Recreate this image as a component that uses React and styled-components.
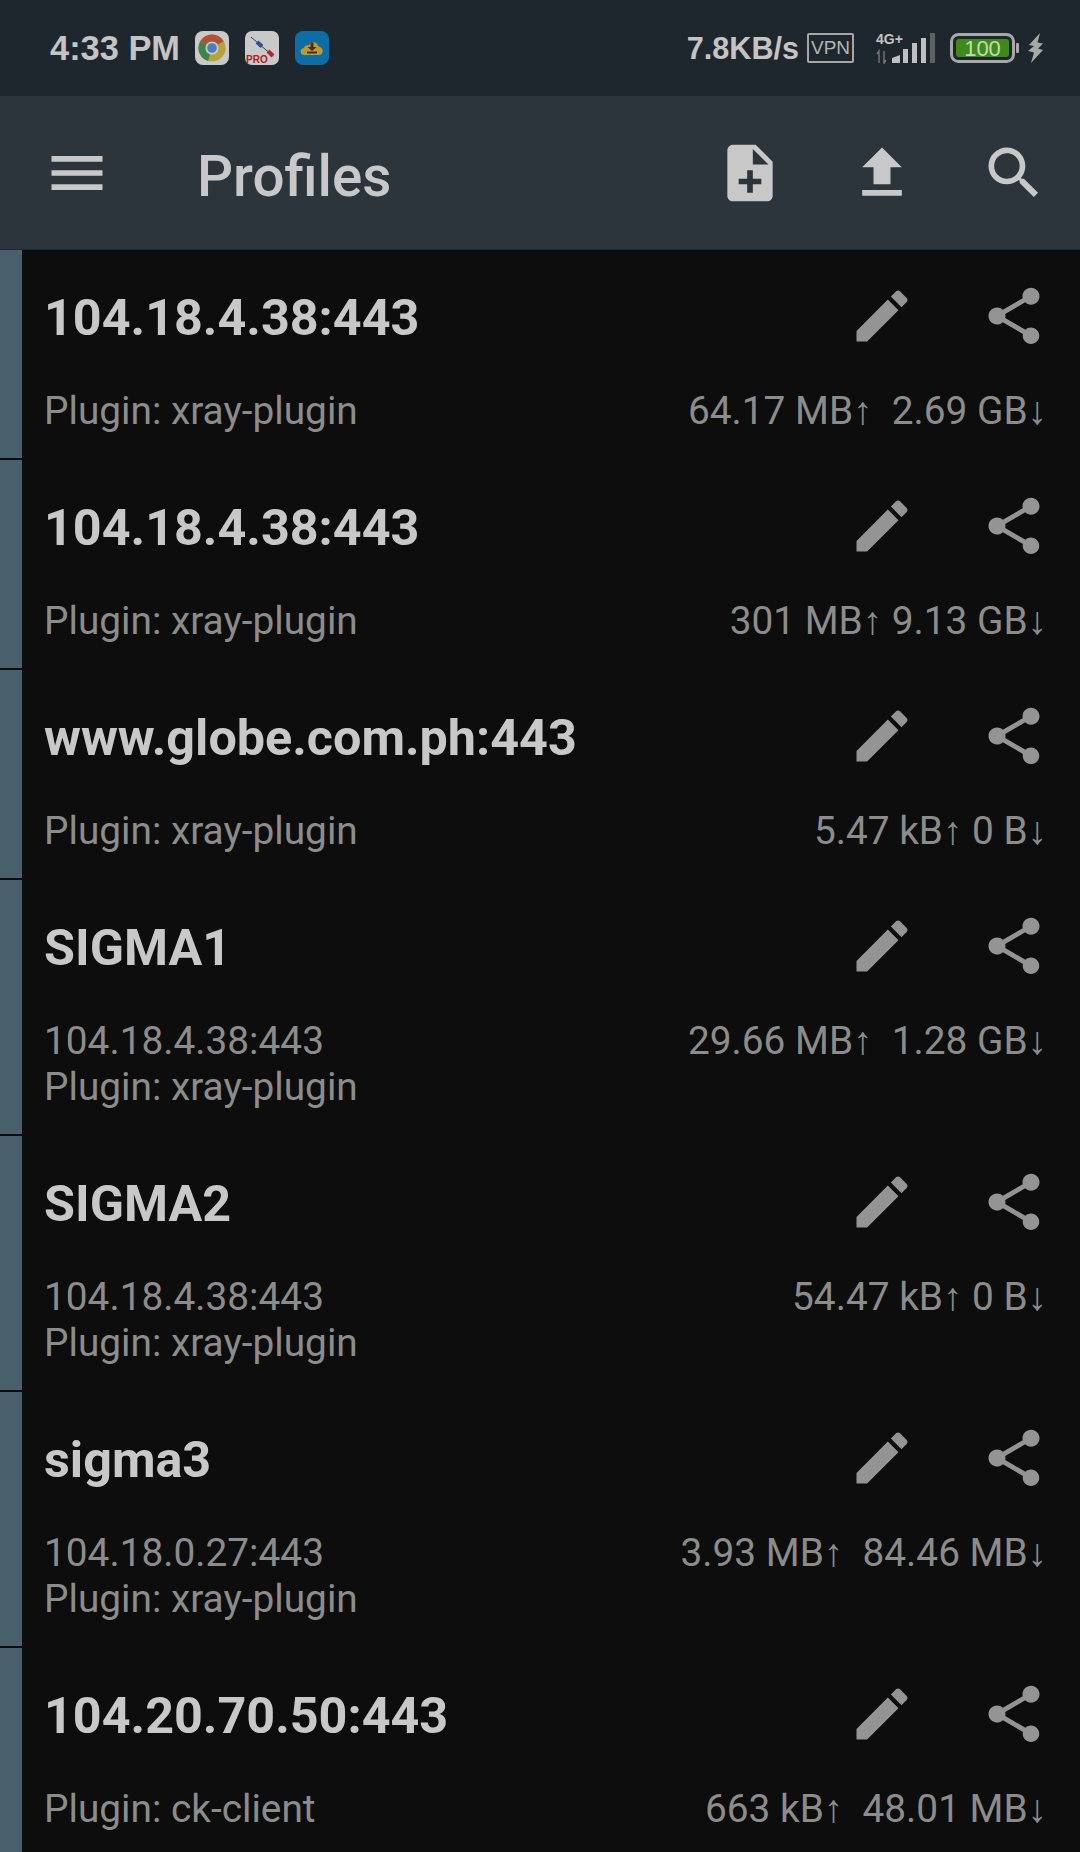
import React from "react";
import styled, { createGlobalStyle } from "styled-components";

const Global = createGlobalStyle`
  html, body { margin: 0; padding: 0; background: #0d0d0d; }
  body { width: 1080px; height: 1852px; overflow: hidden; font-family: Roboto, sans-serif; }
`;

const Page = styled.div`
  width: 1080px;
  height: 1852px;
  display: flex;
  flex-direction: column;
  overflow: hidden;
  background: #0d0d0d;
`;

const StatusBar = styled.header`
  height: 96px;
  flex: none;
  display: flex;
  align-items: center;
  padding: 0 36px 0 50px;
  box-sizing: border-box;
  background: #1f272e;
  color: #c4c4c4;
  font-family: "Liberation Sans", sans-serif;
`;

const Clock = styled.span`
  font-size: 34.4px;
  font-weight: 700;
  margin-right: 15px;
`;

const AppIcon = styled.svg`
  width: 34px;
  height: 34px;
  flex: none;
  margin-right: 16px;
`;

const StatusRight = styled.div`
  margin-left: auto;
  display: flex;
  align-items: center;
`;

const Speed = styled.span`
  font-size: 30.6px;
  font-weight: 700;
  margin-right: 8px;
`;

const VpnBadge = styled.span`
  width: 47px;
  height: 30px;
  box-sizing: border-box;
  border: 2px solid #a6a6a6;
  border-radius: 2px;
  display: flex;
  align-items: center;
  justify-content: center;
  font-size: 19px;
  color: #b4b4b4;
  margin-right: 20px;
`;

const StatusGlyph = styled.svg`
  flex: none;
  display: block;
  margin-left: ${(p) => p.$before || 0}px;
`;

const Toolbar = styled.div`
  height: 154px;
  flex: none;
  display: flex;
  align-items: center;
  box-sizing: border-box;
  background: #2b353b;
  border-bottom: 1px solid #1c2a36;
`;

const MenuButton = styled.div`
  width: 154px;
  height: 100%;
  flex: none;
  display: flex;
  align-items: center;
  justify-content: center;
`;

const Title = styled.h1`
  flex: 1;
  margin: 7px 0 0 43px;
  font-size: 56.6px;
  font-weight: 500;
  color: #c8c8c8;
`;

const IconSlot = styled.div`
  width: 132px;
  height: 132px;
  flex: none;
  display: flex;
  align-items: center;
  justify-content: center;
`;

const Icon = styled.svg`
  width: 68px;
  height: 68px;
  fill: ${(p) => p.$color};
  display: block;
`;

const List = styled.main`
  flex: 1;
  display: flex;
  flex-direction: column;
  min-height: 0;
`;

const Card = styled.article`
  display: flex;
  flex: none;
  background: #0d0d0d;
`;

const Stripe = styled.div`
  width: 22px;
  flex: none;
  display: flex;
  flex-direction: column;
  &::before {
    content: "";
    flex: 1;
    background: #47606c;
  }
  &::after {
    content: "";
    height: 2px;
    background: #0a0d10;
  }
`;

const CardBody = styled.div`
  flex: 1;
  min-width: 0;
  display: flex;
  flex-direction: column;
  padding-bottom: 26px;
`;

const CardHead = styled.div`
  height: 132px;
  display: flex;
  align-items: center;
`;

const Name = styled.h2`
  flex: 1;
  margin: 2px 0 0 22px;
  font-size: 50.3px;
  font-weight: 700;
  color: #c8c8c8;
`;

const Details = styled.div`
  display: flex;
  justify-content: space-between;
  margin-top: 6px;
  padding: 0 33px 0 22px;
  font-size: 38.8px;
  line-height: 46px;
  color: #8c8c8c;
`;

const Lines = styled.div`
  white-space: pre-line;
`;

const paths = {
  menu: "M3 18h18v-2H3v2zm0-5h18v-2H3v2zm0-7v2h18V6H3z",
  add: "M14 2H6c-1.1 0-1.99.9-1.99 2L4 20c0 1.1.89 2 1.99 2H18c1.1 0 2-.9 2-2V8l-6-6zm2 14h-3v3h-2v-3H8v-2h3v-3h2v3h3v2zm-3-7V3.5L18.5 9H13z",
  upload: "M9 16h6v-6h4l-7-7-7 7h4zm-4 2h14v2H5z",
  search: "M15.5 14h-.79l-.28-.27C15.41 12.59 16 11.11 16 9.5 16 5.91 13.09 3 9.5 3S3 5.91 3 9.5 5.91 16 9.5 16c1.61 0 3.09-.59 4.23-1.57l.27.28v.79l5 4.99L20.49 19l-4.99-5zm-6 0C7.01 14 5 11.99 5 9.5S7.01 5 9.5 5 14 7.01 14 9.5 11.99 14 9.5 14z",
  edit: "M3 17.25V21h3.75L17.81 9.94l-3.75-3.75L3 17.25zM20.71 7.04c.39-.39.39-1.02 0-1.41l-2.34-2.34c-.39-.39-1.02-.39-1.41 0l-1.83 1.83 3.75 3.75 1.83-1.83z",
  share: "M18 16.08c-.76 0-1.44.3-1.96.77L8.91 12.7c.05-.23.09-.46.09-.7s-.04-.47-.09-.7l7.05-4.11c.54.5 1.25.81 2.04.81 1.66 0 3-1.34 3-3s-1.34-3-3-3-3 1.34-3 3c0 .24.04.47.09.7L8.04 9.81C7.5 9.31 6.79 9 6 9c-1.66 0-3 1.34-3 3s1.34 3 3 3c.79 0 1.5-.31 2.04-.81l7.12 4.16c-.05.21-.08.43-.08.65 0 1.61 1.31 2.92 2.92 2.92 1.61 0 2.92-1.31 2.92-2.92s-1.31-2.92-2.92-2.92z",
};

const Material = ({ name, color }) => (
  <Icon viewBox="0 0 24 24" $color={color}>
    <path d={paths[name]} />
  </Icon>
);

const ChromeIcon = () => (
  <AppIcon viewBox="0 0 34 34">
    <rect width="34" height="34" rx="8" fill="#c9c9c9" />
    <circle cx="17" cy="17" r="13.5" fill="#b5a33a" />
    <path d="M17 17 5.3 10.2A13.5 13.5 0 0 1 28.7 10.2Z" fill="#b0503a" />
    <path d="M17 17 5.3 10.2A13.5 13.5 0 0 0 13 29.9Z" fill="#3d8448" />
    <circle cx="17" cy="17" r="6.6" fill="#c9c9c9" />
    <circle cx="17" cy="17" r="4.8" fill="#4a7fbe" />
  </AppIcon>
);

const ProIcon = () => (
  <AppIcon viewBox="0 0 34 34">
    <rect width="34" height="34" rx="7" fill="#c9c9c9" />
    <path d="M6 6 28 25" stroke="#3a3f55" strokeWidth="1" />
    <path d="M12 11 17 15.5" stroke="#2f4f8f" strokeWidth="4" />
    <path d="M23 20 28 25" stroke="#a82a30" strokeWidth="4" />
    <text x="1" y="32" fontFamily="Liberation Sans, sans-serif" fontSize="10" fontWeight="700" fill="#b3201f">PRO</text>
  </AppIcon>
);

const CloudIcon = () => (
  <AppIcon viewBox="0 0 34 34">
    <rect width="34" height="34" rx="8" fill="#0f6da6" />
    <path d="M9 24c-4 0-5-6 0-7 .5-2 2.500-3 4.500-2.500 1.500-4 7-4.500 9-1 .5 1.500 1 2 2.500 2.500 4 1 3.500 8-1 8Z" fill="#c09a30" />
    <path d="M15.500 11.500h3v4.500h3l-4.500 4-4.500-4h3ZM12 20.500h10v2H12Z" fill="#4a2b2b" />
  </AppIcon>
);

const NetworkIcon = () => (
  <StatusGlyph width="64" height="32" viewBox="0 0 64 32">
    <text x="2" y="12" fontFamily="Liberation Sans, sans-serif" fontSize="14" fontWeight="700" fill="#c4c4c4">4G+</text>
    <path d="M5 31V19l-2 3M10 19v12l2-3" stroke="#777" strokeWidth="1.4" fill="none" />
    <path d="M18 31v-5l8-3v8Z" fill="#c0c0c0" />
    <rect x="29" y="17" width="5" height="14" fill="#c0c0c0" />
    <rect x="38" y="11" width="5" height="20" fill="#c0c0c0" />
    <rect x="47" y="6" width="5" height="25" fill="#c0c0c0" />
    <rect x="56" y="1" width="5" height="30" fill="#5c6367" />
  </StatusGlyph>
);

const BatteryIcon = () => (
  <StatusGlyph $before={12} width="69" height="30" viewBox="0 0 69 30">
    <rect x="1.500" y="1.500" width="62" height="27" rx="7" fill="none" stroke="#a8a8a8" strokeWidth="3" />
    <rect x="6" y="6" width="53" height="18" rx="3" fill="#3f8a1c" />
    <text x="32.500" y="23" textAnchor="middle" fontFamily="Liberation Sans, sans-serif" fontSize="22" fill="#c6d8b4">100</text>
    <rect x="66" y="10" width="3" height="10" rx="1" fill="#a8a8a8" />
  </StatusGlyph>
);

const BoltIcon = () => (
  <StatusGlyph $before={8} width="17" height="30" viewBox="0 0 17 30">
    <path d="M13 0 2 12l5 1-6 5 6 1.500-3 10.500L16 17l-5-1.500 5-5-5.500-1Z" fill="#a8a8a8" />
  </StatusGlyph>
);

const profiles = [
  { name: "104.18.4.38:443", lines: ["Plugin: xray-plugin"], traffic: "64.17 MB↑\u00a0\u00a02.69 GB↓" },
  { name: "104.18.4.38:443", lines: ["Plugin: xray-plugin"], traffic: "301 MB↑\u00a09.13 GB↓" },
  { name: "www.globe.com.ph:443", lines: ["Plugin: xray-plugin"], traffic: "5.47 kB↑\u00a00 B↓" },
  { name: "SIGMA1", lines: ["104.18.4.38:443", "Plugin: xray-plugin"], traffic: "29.66 MB↑\u00a0\u00a01.28 GB↓" },
  { name: "SIGMA2", lines: ["104.18.4.38:443", "Plugin: xray-plugin"], traffic: "54.47 kB↑\u00a00 B↓" },
  { name: "sigma3", lines: ["104.18.0.27:443", "Plugin: xray-plugin"], traffic: "3.93 MB↑\u00a0\u00a084.46 MB↓" },
  { name: "104.20.70.50:443", lines: ["Plugin: ck-client"], traffic: "663 kB↑\u00a0\u00a048.01 MB↓" },
];

export default function App() {
  return (
    <Page>
      <Global />
      <StatusBar>
        <Clock>4:33 PM</Clock>
        <ChromeIcon />
        <ProIcon />
        <CloudIcon />
        <StatusRight>
          <Speed>7.8KB/s</Speed>
          <VpnBadge>VPN</VpnBadge>
          <NetworkIcon />
          <BatteryIcon />
          <BoltIcon />
        </StatusRight>
      </StatusBar>
      <Toolbar>
        <MenuButton>
          <Material name="menu" color="#c8c8c8" />
        </MenuButton>
        <Title>Profiles</Title>
        <IconSlot><Material name="add" color="#c8c8c8" /></IconSlot>
        <IconSlot><Material name="upload" color="#c8c8c8" /></IconSlot>
        <IconSlot><Material name="search" color="#c8c8c8" /></IconSlot>
      </Toolbar>
      <List>
        {profiles.map((p, i) => (
          <Card key={i}>
            <Stripe />
            <CardBody>
              <CardHead>
                <Name>{p.name}</Name>
                <IconSlot><Material name="edit" color="#949494" /></IconSlot>
                <IconSlot><Material name="share" color="#949494" /></IconSlot>
              </CardHead>
              <Details>
                <Lines>{p.lines.join("\n")}</Lines>
                <span>{p.traffic}</span>
              </Details>
            </CardBody>
          </Card>
        ))}
      </List>
    </Page>
  );
}
